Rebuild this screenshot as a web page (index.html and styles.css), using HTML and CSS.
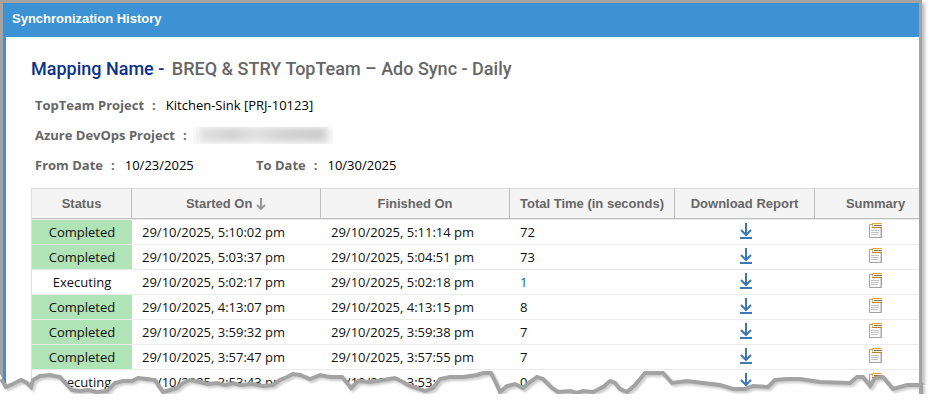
FILE: index.html
```
<!DOCTYPE html>
<html lang="en">
  <head>
    <meta charset="UTF-8">
    <title>Synchronization History</title>
    <link rel="stylesheet" href="styles.css">
  </head>
  <body>

    <svg class="symbols" aria-hidden="true">
      <symbol id="download" viewBox="-2 0 14 16">
        <path d="M6 0v12M1 7l5 5 5-5" fill="none" stroke="#3c78b5" stroke-width="2"/>
        <path d="M0 15h12" stroke="#3c78b5" stroke-width="2"/>
      </symbol>
      <symbol id="summary" viewBox="0 0 14 15">
        <path d="M.5 1.5h12v13H.5z" fill="#f8f8f8" stroke="#a3a3a3"/>
        <path d="M2 7.5h8M2 9.5h8M2 11.5h7" stroke="#c4c4c4"/>
        <path d="M11 5h1v9h-1z" fill="#d4d4d4"/>
        <path d="M3 0h10v5H3z" fill="#fff4d8"/>
        <path d="M13 .5H3.5v3" fill="none" stroke="#e3a93b"/>
        <path d="M5 2.5h8" stroke="#85716d"/>
        <path d="M3 4.5h10" stroke="#b98128"/>
      </symbol>
    </svg>

    <div class="window">
      <main class="frame">
        <header>Synchronization History</header>

        <section>
          <h1>Mapping Name - <span>BREQ &amp; STRY TopTeam – Ado Sync - Daily</span></h1>

          <dl>
            <div class="field"><dt>TopTeam Project</dt><dd>Kitchen-Sink [PRJ-10123]</dd></div>
            <div class="field"><dt>Azure DevOps Project</dt><dd class="hidden-value"><i></i></dd></div>
            <div class="dates">
              <div class="field"><dt>From Date</dt><dd>10/23/2025</dd></div>
              <div class="field"><dt>To Date</dt><dd>10/30/2025</dd></div>
            </div>
          </dl>

          <table>
            <colgroup>
              <col class="col-status">
              <col class="col-date">
              <col class="col-date">
              <col class="col-time">
              <col class="col-report">
              <col class="col-summary">
            </colgroup>
            <thead>
              <tr>
                <th>Status</th>
                <th>Started On <svg class="sort" viewBox="0 0 10 12"><path d="M5 0v10M1 7l4 4 4-4" fill="none" stroke="#999" stroke-width="2"/></svg></th>
                <th>Finished On</th>
                <th>Total Time (in seconds)</th>
                <th>Download Report</th>
                <th>Summary</th>
              </tr>
            </thead>
            <tbody>
              <tr>
                <td class="status completed">Completed</td>
                <td>29/10/2025, 5:10:02 pm</td>
                <td>29/10/2025, 5:11:14 pm</td>
                <td>72</td>
                <td class="icon"><a href="#report" aria-label="Download report"><svg class="download"><use href="#download"/></svg></a></td>
                <td class="icon"><a href="#summary" aria-label="Summary"><svg class="summary"><use href="#summary"/></svg></a></td>
              </tr>
              <tr>
                <td class="status completed">Completed</td>
                <td>29/10/2025, 5:03:37 pm</td>
                <td>29/10/2025, 5:04:51 pm</td>
                <td>73</td>
                <td class="icon"><a href="#report" aria-label="Download report"><svg class="download"><use href="#download"/></svg></a></td>
                <td class="icon"><a href="#summary" aria-label="Summary"><svg class="summary"><use href="#summary"/></svg></a></td>
              </tr>
              <tr>
                <td class="status">Executing</td>
                <td>29/10/2025, 5:02:17 pm</td>
                <td>29/10/2025, 5:02:18 pm</td>
                <td class="running">1</td>
                <td class="icon"><a href="#report" aria-label="Download report"><svg class="download"><use href="#download"/></svg></a></td>
                <td class="icon"><a href="#summary" aria-label="Summary"><svg class="summary"><use href="#summary"/></svg></a></td>
              </tr>
              <tr>
                <td class="status completed">Completed</td>
                <td>29/10/2025, 4:13:07 pm</td>
                <td>29/10/2025, 4:13:15 pm</td>
                <td>8</td>
                <td class="icon"><a href="#report" aria-label="Download report"><svg class="download"><use href="#download"/></svg></a></td>
                <td class="icon"><a href="#summary" aria-label="Summary"><svg class="summary"><use href="#summary"/></svg></a></td>
              </tr>
              <tr>
                <td class="status completed">Completed</td>
                <td>29/10/2025, 3:59:32 pm</td>
                <td>29/10/2025, 3:59:38 pm</td>
                <td>7</td>
                <td class="icon"><a href="#report" aria-label="Download report"><svg class="download"><use href="#download"/></svg></a></td>
                <td class="icon"><a href="#summary" aria-label="Summary"><svg class="summary"><use href="#summary"/></svg></a></td>
              </tr>
              <tr>
                <td class="status completed">Completed</td>
                <td>29/10/2025, 3:57:47 pm</td>
                <td>29/10/2025, 3:57:55 pm</td>
                <td>7</td>
                <td class="icon"><a href="#report" aria-label="Download report"><svg class="download"><use href="#download"/></svg></a></td>
                <td class="icon"><a href="#summary" aria-label="Summary"><svg class="summary"><use href="#summary"/></svg></a></td>
              </tr>
              <tr>
                <td class="status">Executing</td>
                <td>29/10/2025, 3:53:43 pm</td>
                <td>29/10/2025, 3:53:43 pm</td>
                <td>0</td>
                <td class="icon"><a href="#report" aria-label="Download report"><svg class="download"><use href="#download"/></svg></a></td>
                <td class="icon"><a href="#summary" aria-label="Summary"><svg class="summary"><use href="#summary"/></svg></a></td>
              </tr>
            </tbody>
          </table>
        </section>
      </main>

      <!-- torn bottom edge -->
      <svg class="tear" viewBox="0 364 928 40" preserveAspectRatio="none" aria-hidden="true">
        <path class="paper" d="M0 374L3 380 6 387 13 384 21 380 27 383 31 387 33 380 40 376 50 375 60 377 65 383 72 390 80 391 88 390 97 392 107 391 115 383 123 381 132 381 138 378 147 379 155 380 158 385 163 392 170 390 177 388 183 383 190 380 200 382 208 384 217 383 225 385 233 383 240 385 253 384 263 386 273 385 280 380 287 377 293 374 300 375 310 379 320 375 330 377 342 377 347 383 351 388 358 381 370 382 383 380 395 378 403 382 410 386 425 391 433 388 440 379 450 377 463 377 477 375 483 373 491 373 496 383 500 392 507 386 515 384 523 388 530 382 537 377 543 379 552 388 558 392 570 391 577 393 583 391 593 392 603 387 610 381 615 383 620 389 627 392 635 385 645 373 663 373 672 383 687 381 703 383 720 385 733 389 745 389 753 386 768 387 775 380 787 379 800 379 820 382 850 383 857 377 863 377 870 386 875 378 883 377 893 389 907 385 921 385 928 385V404H0z"/>
        <path class="edge" d="M1 379L6 387 13 384 21 380 27 383 31 387 33 380 40 376 50 375 60 377 65 383 72 390 80 391 88 390 97 392 107 391 115 383 123 381 132 381 138 378 147 379 155 380 158 385 163 392 170 390 177 388 183 383 190 380 200 382 208 384 217 383 225 385 233 383 240 385 253 384 263 386 273 385 280 380 287 377 293 374 300 375 310 379 320 375 330 377 342 377 347 383 351 388 358 381 370 382 383 380 395 378 403 382 410 386 425 391 433 388 440 379 450 377 463 377 477 375 483 373 491 373 496 383 500 392 507 386 515 384 523 388 530 382 537 377 543 379 552 388 558 392 570 391 577 393 583 391 593 392 603 387 610 381 615 383 620 389 627 392 635 385 645 373 663 373 672 383 687 381 703 383 720 385 733 389 745 389 753 386 768 387 775 380 787 379 800 379 820 382 850 383 857 377 863 377 870 386 875 378 883 377 893 389 907 385 921 385V394"/>
      </svg>
    </div>

  </body>
</html>
```
FILE: styles.css
```
body {
  background: white;
  color: #111;
  font-family: "Open Sans", "Noto Sans", sans-serif;
  font-size: 13px;
  margin: 0;
}

.symbols {
  display: none;
}

.window {
  position: relative;
}

.frame {
  border: 3px solid #a3a3a3;
  border-bottom: none;
  box-shadow: 3px 3px 3px rgba(0, 0, 0, 0.25);
  margin-right: 6px;
}

header {
  background: #3c92d3;
  color: white;
  font-family: "Liberation Sans", Arial, sans-serif;
  font-weight: 700;
  line-height: 32px;
  padding: 0 9px 2px;
}

section {
  border-left: 3px solid #3c92d3;
  overflow: hidden;
  padding: 17px 0 0 25px;
}

h1 {
  color: #0b3387;
  font-family: Roboto, sans-serif;
  font-size: 18px;
  font-weight: 500;
  line-height: 30px;
  margin: 0 0 6px;
}

h1 span {
  color: #666;
  margin-left: 3px;
}

dl {
  line-height: 30px;
  margin: 0 0 8px 4px;
}

.field {
  align-items: center;
  display: flex;
  height: 30px;
}

dt {
  color: #666;
  font-weight: 700;
}

dt::after {
  content: ":";
  margin: 0 10px 0 8px;
}

dd {
  color: black;
  margin: 0;
}

.dates {
  display: grid;
  grid-template-columns: 221px 1fr;
}

.hidden-value {
  background: #fafafa;
  height: 17px;
  margin-left: -4px;
  overflow: hidden;
  width: 140px;
}

.hidden-value i {
  background: linear-gradient(90deg, #ddd, #ccc 25%, #ddd 45%, #ccc 65%, #c4c4c4);
  display: block;
  filter: blur(4px);
  height: 13px;
  margin: 1px 6px;
}

table {
  border-collapse: separate;
  border-left: 1px solid #dcdcdc;
  border-spacing: 0;
  table-layout: fixed;
  width: calc(100% + 18px);
}

.col-status { width: 100px; }
.col-date { width: 189px; }
.col-time { width: 165px; }
.col-report { width: 140px; }

th {
  background: #f4f4f4;
  border-bottom: 1px solid #bfbfbf;
  border-right: 1px solid #bfbfbf;
  border-top: 1px solid #dcdcdc;
  color: #666;
  font-family: "Liberation Sans", Arial, sans-serif;
  font-weight: 700;
  height: 29px;
  padding: 0;
  white-space: nowrap;
}

.sort {
  height: 12px;
  vertical-align: -2px;
  width: 10px;
}

td {
  border-top: 1px solid #ebebeb;
  height: 24px;
  line-height: 24px;
  padding: 0 10px;
  white-space: nowrap;
}

.status,
.icon {
  padding: 0;
  text-align: center;
}

.completed {
  background: #b0e3b5;
  background-clip: padding-box;
}

.running {
  color: #0b5cab;
}

.icon a {
  display: block;
  height: 24px;
}

.download {
  height: 16px;
  margin-top: 3px;
  vertical-align: top;
  width: 14px;
}

.summary {
  height: 15px;
  margin-top: 3px;
  vertical-align: top;
  width: 14px;
}

.tear {
  bottom: -10px;
  height: 40px;
  left: 0;
  position: absolute;
  width: 100%;
}

.paper {
  fill: white;
}

.edge {
  fill: none;
  filter: drop-shadow(2px 2px 1px rgba(0, 0, 0, 0.2));
  stroke: #a3a3a3;
  stroke-width: 4;
}
```
